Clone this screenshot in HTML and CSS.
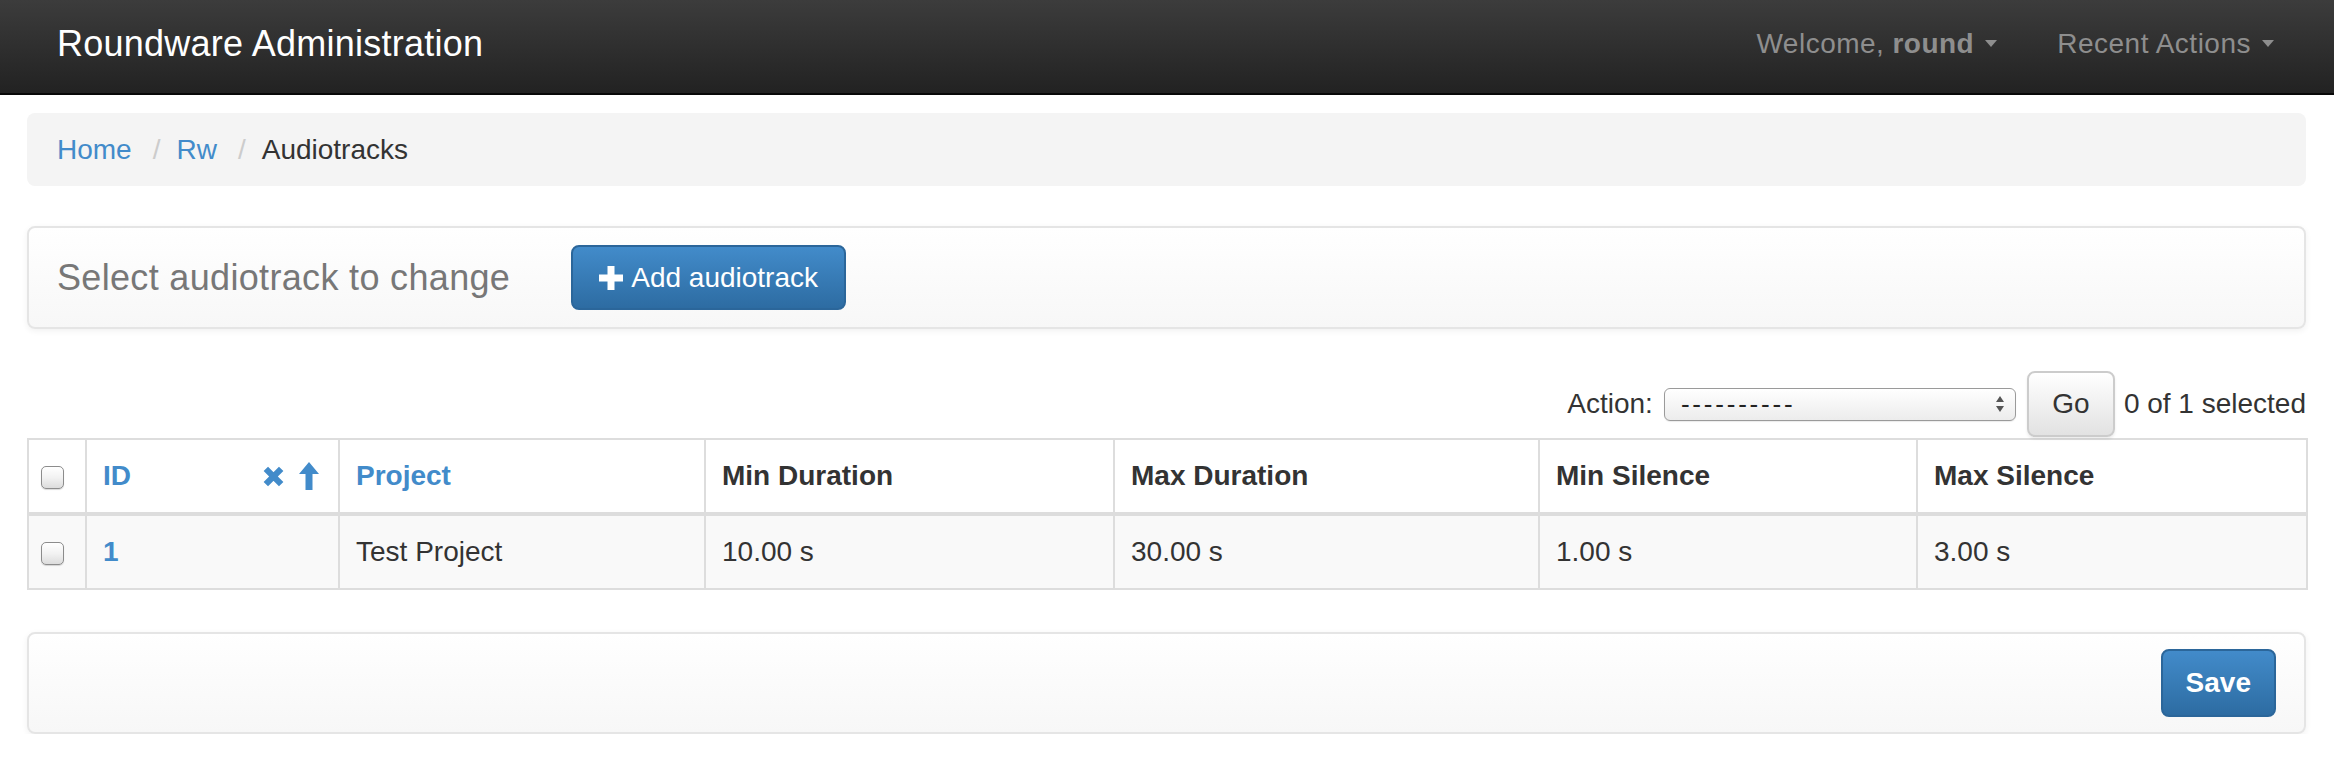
FILE: index.html
```html
<!DOCTYPE html>
<html lang="en">
<head>
<meta charset="utf-8">
<title>Select audiotrack to change | Roundware Administration</title>
<link rel="stylesheet" href="styles.css">
</head>
<body>
<header class="navbar">
  <div class="brand">Roundware Administration</div>
  <nav class="nav-right">
    <a class="nav-item" href="#">Welcome, <b>round</b><span class="caret"></span></a>
    <a class="nav-item" href="#">Recent Actions<span class="caret"></span></a>
  </nav>
</header>

<main class="page">
  <ol class="breadcrumb">
    <li><a href="#">Home</a></li>
    <li class="sep">/</li>
    <li><a href="#">Rw</a></li>
    <li class="sep">/</li>
    <li class="active">Audiotracks</li>
  </ol>

  <div class="toolbar">
    <h1 class="toolbar-title">Select audiotrack to change</h1>
    <a class="btn btn-primary btn-add" href="#">
      <svg class="icon-plus" viewBox="0 0 24 24" width="24" height="24" aria-hidden="true"><path d="M8.5 0h7v8.5H24v7h-8.5V24h-7v-8.5H0v-7h8.5z" fill="#fff"/></svg>
      Add audiotrack
    </a>
  </div>

  <div class="actions">
    <label class="action-label">Action:</label>
    <div class="select">
      <span class="select-text">----------</span>
      <svg class="select-arrows" viewBox="0 0 10 18" width="10" height="18" aria-hidden="true"><path d="M5 1L9 7H1z M5 17L1 11H9z" fill="#555"/></svg>
    </div>
    <button class="btn btn-default btn-go">Go</button>
    <span class="action-counter">0 of 1 selected</span>
  </div>

  <table class="result-list">
    <colgroup>
      <col style="width:58px">
      <col style="width:253px">
      <col style="width:366px">
      <col style="width:409px">
      <col style="width:425px">
      <col style="width:378px">
      <col style="width:390px">
    </colgroup>
    <thead>
      <tr>
        <th class="check-cell"><input type="checkbox" class="cb"></th>
        <th>
          <a href="#">ID</a>
          <span class="sort-icons">
            <svg viewBox="0 0 24 24" width="23" height="23" aria-hidden="true"><path d="M4 4L20 20M20 4L4 20" stroke="#428bca" stroke-width="6.5"/></svg>
            <svg viewBox="0 0 20 28" width="20" height="28" aria-hidden="true"><path d="M10 0L20 12H13.5V28H6.5V12H0z" fill="#428bca"/></svg>
          </span>
        </th>
        <th><a href="#">Project</a></th>
        <th>Min Duration</th>
        <th>Max Duration</th>
        <th>Min Silence</th>
        <th>Max Silence</th>
      </tr>
    </thead>
    <tbody>
      <tr>
        <td class="check-cell"><input type="checkbox" class="cb"></td>
        <td><a class="id-link" href="#">1</a></td>
        <td>Test Project</td>
        <td>10.00 s</td>
        <td>30.00 s</td>
        <td>1.00 s</td>
        <td>3.00 s</td>
      </tr>
    </tbody>
  </table>

  <div class="submit-row">
    <button class="btn btn-primary btn-save">Save</button>
  </div>
</main>
</body>
</html>
```

FILE: styles.css
```css
* { box-sizing: border-box; }

html, body {
  margin: 0;
  padding: 0;
  background: #fff;
}

body {
  font-family: "Liberation Sans", Arial, Helvetica, sans-serif;
  font-size: 28px;
  line-height: 40px;
  color: #333;
}

a { color: #428bca; text-decoration: none; }

/* Navbar */
.navbar {
  height: 95px;
  display: flex;
  align-items: center;
  justify-content: space-between;
  padding: 0 30px 6px 57px;
  background: linear-gradient(to bottom, #3c3c3c 0%, #222 100%);
  border-bottom: 2px solid #080808;
}

.brand {
  color: #fff;
  font-size: 36px;
  line-height: 40px;
  letter-spacing: 0.25px;
}

.nav-right {
  display: flex;
  align-items: center;
}

.nav-item {
  color: #8e8e8e;
  padding: 0 30px;
  font-size: 28px;
  letter-spacing: 0.5px;
  display: flex;
  align-items: center;
}

.nav-item b { margin-left: 8px; }

.caret {
  display: inline-block;
  width: 0;
  height: 0;
  margin-left: 11px;
  border-top: 7px solid #8e8e8e;
  border-left: 6px solid transparent;
  border-right: 6px solid transparent;
}

/* Page */
.page {
  padding: 0 28px 0 27px;
}

.breadcrumb {
  list-style: none;
  margin: 18px 0 0;
  padding: 16px 30px;
  line-height: 41px;
  background: #f4f4f4;
  border-radius: 8px;
  display: flex;
}

.breadcrumb .sep {
  color: #ccc;
  padding: 0 16px 0 21px;
}

.breadcrumb .active { color: #333; }

/* Toolbar */
.toolbar {
  margin-top: 40px;
  display: flex;
  align-items: center;
  padding: 17px 28px;
  border: 2px solid #e5e5e5;
  border-radius: 8px;
  background: linear-gradient(to bottom, #fff 0%, #f7f7f7 100%);
  box-shadow: 0 2px 6px rgba(0, 0, 0, 0.06);
}

.toolbar-title {
  margin: 0;
  font-size: 36px;
  font-weight: normal;
  line-height: 40px;
  letter-spacing: 0.33px;
  color: #777;
}

.btn {
  display: inline-flex;
  align-items: center;
  justify-content: center;
  font-family: inherit;
  font-size: 28px;
  border-radius: 8px;
  cursor: pointer;
}

.btn-primary {
  color: #fff;
  background: linear-gradient(to bottom, #428bca 0%, #2d6ca2 100%);
  border: 2px solid #2b669a;
}

.btn-add {
  margin-left: 61px;
  height: 65px;
  padding: 0 26px;
}

.icon-plus { margin-right: 8px; }

/* Actions */
.actions {
  margin-top: 42px;
  margin-bottom: 1px;
  display: flex;
  justify-content: flex-end;
  align-items: center;
}

.action-label { margin-right: 11px; }

.select {
  width: 352px;
  height: 33px;
  display: flex;
  align-items: center;
  padding: 0 10px 0 16px;
  border: 1px solid #9a9a9a;
  border-radius: 6px;
  background: linear-gradient(to bottom, #fff 0%, #ececec 100%);
  box-shadow: 0 1px 1px rgba(0,0,0,0.08);
}

.select-text {
  font-size: 26px;
  letter-spacing: 2.8px;
  line-height: 30px;
  color: #222;
}

.select-arrows { margin-left: auto; }

.btn-default {
  color: #333;
  background: linear-gradient(to bottom, #fff 0%, #e2e2e2 100%);
  border: 2px solid #ccc;
  box-shadow: 0 2px 3px rgba(0,0,0,0.08);
}

.btn-go {
  margin-left: 11px;
  width: 88px;
  height: 66px;
  padding: 0;
}

.action-counter { margin-left: 9px; }

/* Table */
.result-list {
  width: 100%;
  table-layout: fixed;
  border-collapse: collapse;
  border: 2px solid #ddd;
  margin-bottom: 42px;
}

.result-list th,
.result-list td {
  text-align: left;
  padding: 16px 16px;
  line-height: 40px;
  border: 2px solid #ddd;
  vertical-align: middle;
}

.result-list th {
  font-weight: bold;
  color: #333;
  border-bottom: 4px solid #ddd;
}

.result-list tbody tr { background: #f9f9f9; }

.result-list th a,
.id-link { font-weight: bold; }

.check-cell { text-align: center; }

.cb {
  appearance: none;
  -webkit-appearance: none;
  width: 23px;
  height: 23px;
  margin: 0 0 0 -4px;
  vertical-align: middle;
  border: 1px solid #8c8c8c;
  border-radius: 5px;
  background: linear-gradient(to bottom, #fff 0%, #f2f2f2 50%, #dcdcdc 100%);
  box-shadow: 0 1px 1px rgba(0,0,0,0.15);
  display: inline-block;
}

.sort-icons {
  float: right;
  display: flex;
  align-items: center;
  gap: 14px;
  height: 40px;
  margin-right: 3px;
}

/* Submit row */
.submit-row {
  display: flex;
  justify-content: flex-end;
  padding: 15px 28px;
  border: 2px solid #e5e5e5;
  border-radius: 8px;
  background: linear-gradient(to bottom, #fff 0%, #f7f7f7 100%);
  box-shadow: 0 2px 6px rgba(0, 0, 0, 0.06);
}

.btn-save {
  height: 68px;
  padding: 0 23px;
  font-weight: bold;
}
```
